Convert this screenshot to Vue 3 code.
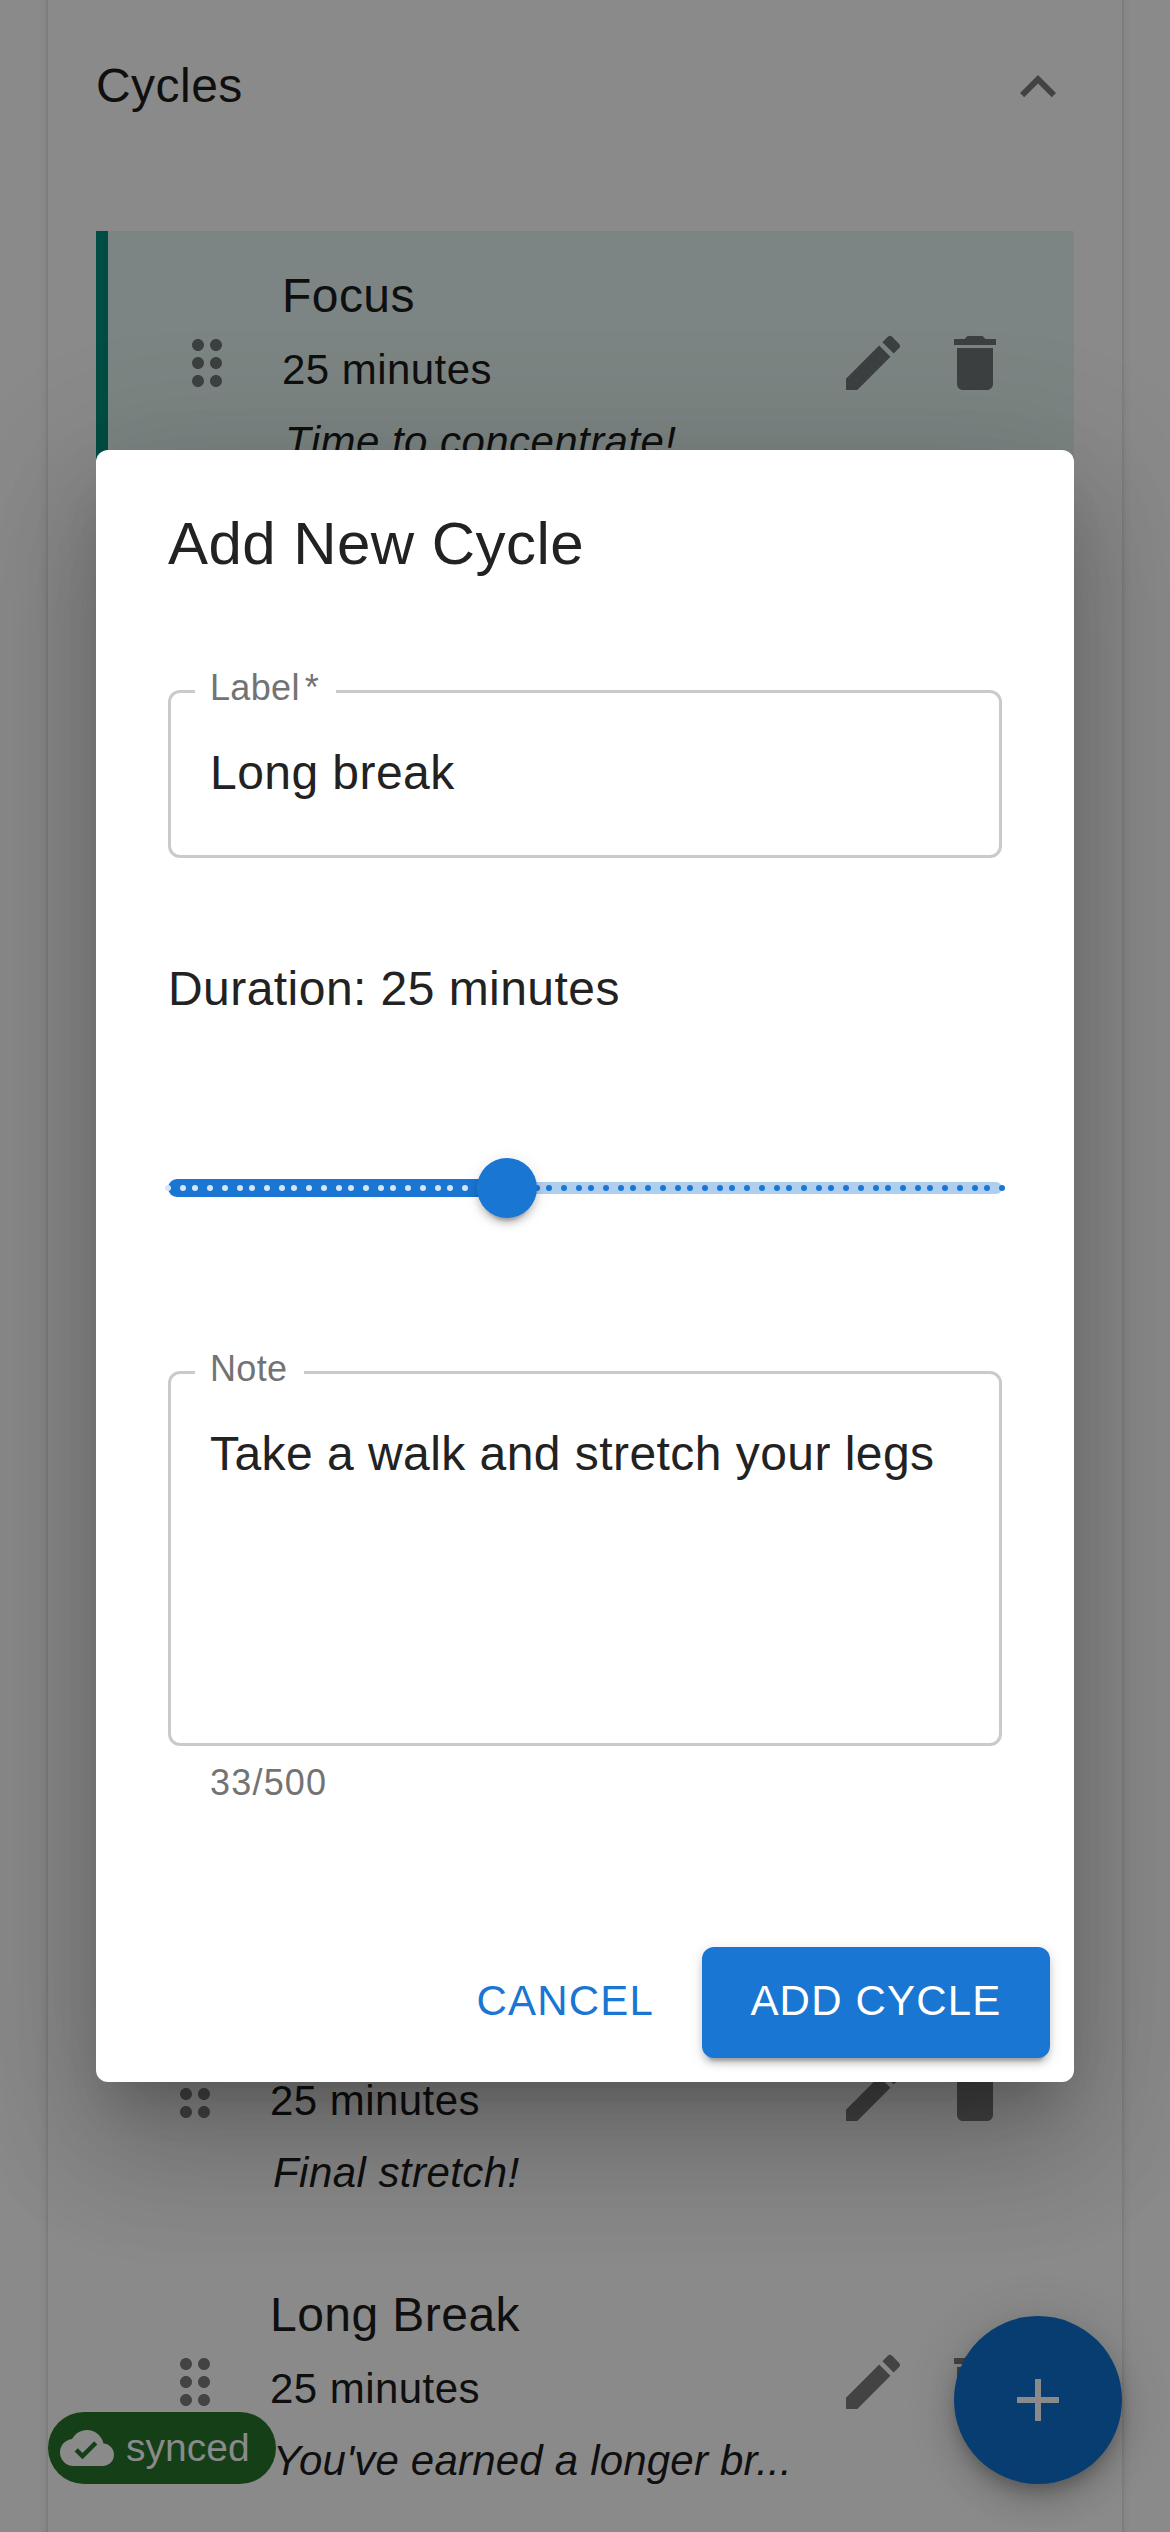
<script setup>
const lastCycles = [
  { title: '', duration: '25 minutes', note: 'Final stretch!' },
  { title: 'Long Break', duration: '25 minutes', note: "You've earned a longer br...", clipped: true },
]

const duration = 25
const maxDuration = 60
const trackUnits = 278
const marks = Array.from({ length: maxDuration }, (_, i) => ({
  left: Math.round((i / (maxDuration - 1)) * trackUnits) * 3,
  active: i < duration,
}))
const thumbLeft = ((duration - 1) / (maxDuration - 1)) * 100

const icons = {
  drag: 'M11 18c0 1.1-.9 2-2 2s-2-.9-2-2 .9-2 2-2 2 .9 2 2m-2-8c-1.1 0-2 .9-2 2s.9 2 2 2 2-.9 2-2-.9-2-2-2m0-6c-1.1 0-2 .9-2 2s.9 2 2 2 2-.9 2-2-.9-2-2-2m6 4c1.1 0 2-.9 2-2s-.9-2-2-2-2 .9-2 2 .9 2 2 2m0 2c-1.1 0-2 .9-2 2s.9 2 2 2 2-.9 2-2-.9-2-2-2m0 6c-1.1 0-2 .9-2 2s.9 2 2 2 2-.9 2-2-.9-2-2-2',
  edit: 'M3 17.25V21h3.75L17.81 9.94l-3.75-3.75zM20.71 7.04c.39-.39.39-1.02 0-1.41l-2.34-2.34a.9959.9959 0 0 0-1.41 0l-1.83 1.83 3.75 3.75z',
  trash: 'M6 19c0 1.1.9 2 2 2h8c1.1 0 2-.9 2-2V7H6zM19 4h-3.5l-1-1h-5l-1 1H5v2h14z',
}
</script>

<template>
  <main class="screen">
    <section class="panel">
      <header class="panel-head">
        <span class="panel-title">Cycles</span>
        <svg class="icon" viewBox="0 0 24 24"><path d="M7.41 15.41 12 10.83l4.59 4.58L18 14l-6-6-6 6z" /></svg>
      </header>

      <article class="row current">
        <svg class="icon" viewBox="0 0 24 24"><path :d="icons.drag" /></svg>
        <div class="row-text">
          <p class="row-title">Focus</p>
          <p class="row-line">25 minutes</p>
          <p class="row-line note">Time to concentrate!</p>
        </div>
        <div class="row-actions">
          <svg class="icon" viewBox="0 0 24 24"><path :d="icons.edit" /></svg>
          <svg class="icon" viewBox="0 0 24 24"><path :d="icons.trash" /></svg>
        </div>
      </article>

      <div class="rest">
        <article v-for="cycle in lastCycles" :key="cycle.note" class="row">
          <svg class="icon" viewBox="0 0 24 24"><path :d="icons.drag" /></svg>
          <div class="row-text">
            <p class="row-title">{{ cycle.title }}</p>
            <p class="row-line">{{ cycle.duration }}</p>
            <p class="row-line note" :class="{ clipped: cycle.clipped }">{{ cycle.note }}</p>
          </div>
          <div class="row-actions">
            <svg class="icon" viewBox="0 0 24 24"><path :d="icons.edit" /></svg>
            <svg class="icon" viewBox="0 0 24 24"><path :d="icons.trash" /></svg>
          </div>
        </article>
      </div>
    </section>

    <div class="chip">
      <svg class="chip-icon" viewBox="0 0 24 24"><path d="M19.35 10.04C18.67 6.59 15.64 4 12 4 9.11 4 6.6 5.64 5.35 8.04 2.34 8.36 0 10.91 0 14c0 3.31 2.69 6 6 6h13c2.76 0 5-2.24 5-5 0-2.64-2.05-4.78-4.65-4.96M10 17l-3.5-3.5 1.41-1.41L10 14.17 15.18 9l1.41 1.41z" /></svg>
      <span>synced</span>
    </div>

    <button class="fab" aria-label="Add">
      <svg class="icon" viewBox="0 0 24 24"><path d="M19 13h-6v6h-2v-6H5v-2h6V5h2v6h6z" /></svg>
    </button>

    <section class="dialog" role="dialog">
      <h2 class="dialog-title">Add New Cycle</h2>

      <fieldset class="field field-label">
        <legend>Label<span class="star">*</span></legend>
        <div class="value">Long break</div>
      </fieldset>

      <p class="duration">Duration: 25 minutes</p>

      <div class="slider">
        <span class="rail"></span>
        <span class="track" :style="{ width: thumbLeft + '%' }"></span>
        <span
          v-for="mark in marks"
          :key="mark.left"
          class="mark"
          :class="{ active: mark.active }"
          :style="{ left: mark.left + 'px' }"
        ></span>
        <span class="thumb" :style="{ left: thumbLeft + '%' }"></span>
      </div>

      <fieldset class="field field-note">
        <legend>Note</legend>
        <div class="value">Take a walk and stretch your legs</div>
      </fieldset>
      <p class="helper">33/500</p>

      <footer class="actions">
        <button class="btn text">CANCEL</button>
        <button class="btn contained">ADD CYCLE</button>
      </footer>
    </section>
  </main>
</template>

<style>
body {
  margin: 0;
  background: #8a8a8a;
}
</style>

<style scoped>
* {
  box-sizing: border-box;
}

.screen {
  position: relative;
  width: 1170px;
  height: 2532px;
  padding: 0 48px;
  overflow: hidden;
  background: #8a8a8a;
  color: #0f0f0f;
  font-family: "Liberation Sans", Arial, sans-serif;
}

p,
h2 {
  margin: 0;
  font-weight: 400;
}

button {
  border: 0;
  padding: 0;
  font-family: inherit;
}

.icon {
  display: block;
  flex: none;
  width: 72px;
  height: 72px;
  fill: #434343;
}

/* The card continues past both ends of the screen. */
.panel {
  height: 2592px;
  margin-top: -30px;
  padding: 30px 48px;
  background: #8a8a8a;
  box-shadow: 0 6px 3px -3px rgba(0, 0, 0, 0.2), 0 3px 3px 0 rgba(0, 0, 0, 0.14), 0 3px 9px 0 rgba(0, 0, 0, 0.12);
}

.panel-head {
  display: flex;
  justify-content: space-between;
  height: 231px;
  padding-top: 51px;
}

.panel-title {
  margin-top: -1px;
  font-size: 48px;
  line-height: 72px;
  letter-spacing: 0.45px;
}

.row {
  display: flex;
  align-items: center;
  height: 264px;
  padding: 0 63px;
}

.row + .row {
  margin-top: 24px;
}

.row.current {
  border-left: 12px solid #004d44;
  background: #7c8583;
}

.row.current .icon {
  fill: #3c4040;
}

.rest {
  margin-top: 1467px;
}

.row-text {
  flex: 1;
  align-self: flex-start;
  padding: 29px 0 0 39px;
  white-space: nowrap;
}

.row-title {
  height: 72px;
  margin-bottom: 2px;
  font-size: 48px;
  line-height: 72px;
  letter-spacing: 0.45px;
}

.row-line {
  font-size: 42px;
  line-height: 72px;
  letter-spacing: 0.45px;
}

.note {
  padding-left: 3px;
  font-style: italic;
}

.note.clipped {
  letter-spacing: 0.2px;
}

.row-actions {
  display: flex;
  gap: 30px;
}

.chip {
  position: absolute;
  left: 48px;
  top: 2412px;
  display: flex;
  align-items: center;
  gap: 12px;
  width: 228px;
  height: 72px;
  padding-left: 12px;
  border-radius: 36px;
  background: #154017;
  color: #8a8a8a;
  font-size: 39px;
  line-height: 70px;
}

.chip-icon {
  width: 54px;
  height: 54px;
  fill: #8a8a8a;
}

.fab {
  position: absolute;
  left: 954px;
  top: 2316px;
  display: flex;
  align-items: center;
  justify-content: center;
  width: 168px;
  height: 168px;
  border-radius: 50%;
  background: #083d71;
  box-shadow: 0 9px 15px -3px rgba(0, 0, 0, 0.2), 0 18px 30px 0 rgba(0, 0, 0, 0.14), 0 3px 54px 0 rgba(0, 0, 0, 0.12);
}

.fab .icon {
  fill: #8a8a8a;
}

.dialog {
  position: absolute;
  left: 96px;
  top: 450px;
  display: flex;
  flex-direction: column;
  width: 978px;
  height: 1632px;
  padding: 48px 72px 24px;
  border-radius: 12px;
  background: #fff;
  color: #222;
  box-shadow: 0 33px 45px -21px rgba(0, 0, 0, 0.2), 0 72px 114px 9px rgba(0, 0, 0, 0.14), 0 27px 138px 24px rgba(0, 0, 0, 0.12);
}

.dialog-title {
  height: 96px;
  font-size: 60px;
  line-height: 92px;
  letter-spacing: 0.45px;
}

.field {
  flex: none;
  min-width: 0;
  margin: 0;
  padding: 0 39px 0 24px;
  border: 3px solid #cacaca;
  border-radius: 12px;
}

/* The legend is taller than the border, so each box starts above its line. */
.field legend {
  height: 42px;
  padding: 0 17px 0 15px;
  color: #737373;
  font-size: 36px;
  line-height: 35px;
  letter-spacing: 0.34px;
}

.star {
  margin-left: 5px;
}

.field .value {
  padding-left: 15px;
  font-size: 48px;
  line-height: 69px;
  letter-spacing: 0.45px;
  white-space: nowrap;
}

.field-label {
  height: 188px;
  margin-top: 76px;
}

.field .value {
  margin-top: 26px;
}

.duration {
  margin-top: 95px;
  font-size: 48px;
  line-height: 72px;
  letter-spacing: 0.45px;
}

.slider {
  position: relative;
  flex: none;
  height: 60px;
  margin-top: 133px;
}

.rail,
.track,
.mark,
.thumb {
  position: absolute;
  top: 50%;
  transform: translateY(-50%);
}

.rail {
  left: 0;
  width: 100%;
  height: 12px;
  border-radius: 6px;
  background: #b0cef0;
}

.track {
  left: 0;
  height: 18px;
  border-radius: 9px;
  background: #1976d2;
}

.mark {
  width: 6px;
  height: 6px;
  margin-left: -3px;
  border-radius: 3px;
  background: #1976d2;
}

.mark.active {
  background: #d7e5f6;
}

.thumb {
  width: 60px;
  height: 60px;
  margin-left: -30px;
  border-radius: 50%;
  background: #1976d2;
  box-shadow: 0 9px 3px -6px rgba(0, 0, 0, 0.2), 0 6px 6px 0 rgba(0, 0, 0, 0.14), 0 3px 15px 0 rgba(0, 0, 0, 0.12);
}

.field-note {
  height: 395px;
  margin-top: 133px;
}

.helper {
  margin-top: 7px;
  padding-left: 42px;
  color: #737373;
  font-size: 36px;
  line-height: 60px;
  letter-spacing: 1.2px;
}

.actions {
  display: flex;
  justify-content: flex-end;
  align-items: center;
  gap: 24px;
  margin: auto -48px 0 0;
}

.btn {
  height: 111px;
  border-radius: 12px;
  background: transparent;
  color: #1976d2;
  font-size: 42px;
  letter-spacing: 1.2px;
  padding-bottom: 3px;
}

.btn.text {
  padding-left: 24px;
  padding-right: 24px;
}

.btn.contained {
  width: 348px;
  background: #1976d2;
  color: #fff;
  box-shadow: 0 9px 3px -6px rgba(0, 0, 0, 0.2), 0 6px 6px 0 rgba(0, 0, 0, 0.14), 0 3px 15px 0 rgba(0, 0, 0, 0.12);
}
</style>
